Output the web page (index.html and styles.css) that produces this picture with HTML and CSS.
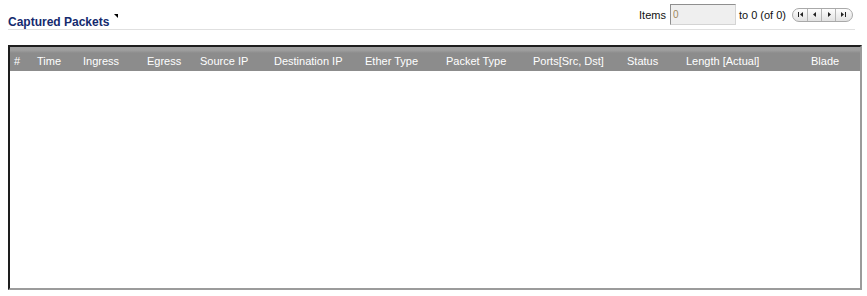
FILE: index.html
```html
<!DOCTYPE html>
<html>
<head>
<meta charset="utf-8">
<link rel="stylesheet" href="styles.css">
</head>
<body>
<div class="panel">
  <div class="topbar">
    <div class="title">Captured Packets<span class="corner"></span></div>
    <div class="pager">
      <span class="label">Items</span>
      <input class="items" type="text" value="0">
      <span class="range">to 0 (of 0)</span>
      <div class="nav">
        <span class="btn"><svg width="7" height="5" viewBox="0 0 7 5"><rect x="0" y="0" width="1" height="5" fill="#222"/><path d="M5 0 L2 2.5 L5 5Z" fill="#222"/></svg></span>
        <span class="btn"><svg width="4" height="5" viewBox="0 0 4 5"><path d="M3 0 L0 2.5 L3 5Z" fill="#222"/></svg></span>
        <span class="btn"><svg width="4" height="5" viewBox="0 0 4 5"><path d="M1 0 L4 2.5 L1 5Z" fill="#222"/></svg></span>
        <span class="btn"><svg width="7" height="5" viewBox="0 0 7 5"><path d="M2 0 L5 2.5 L2 5Z" fill="#222"/><rect x="6" y="0" width="1" height="5" fill="#222"/></svg></span>
      </div>
    </div>
  </div>
  <div class="grid">
    <div class="head">
      <span>#</span>
      <span>Time</span>
      <span>Ingress</span>
      <span>Egress</span>
      <span>Source IP</span>
      <span>Destination IP</span>
      <span>Ether Type</span>
      <span>Packet Type</span>
      <span>Ports[Src, Dst]</span>
      <span>Status</span>
      <span>Length [Actual]</span>
      <span>Blade</span>
    </div>
    <div class="body"></div>
  </div>
</div>
</body>
</html>
```
FILE: styles.css
```css
html, body {
  margin: 0;
  padding: 0;
  background: #fff;
}
body {
  font-family: "Liberation Sans", Arial, sans-serif;
  font-size: 11px;
  color: #000;
}
.panel {
  width: 854px;
  padding: 0 0 0 8px;
}
.topbar {
  display: flex;
  justify-content: space-between;
  align-items: flex-end;
  height: 29px;
  width: 847px;
  border-bottom: 1px solid #e0e0e0;
}
.title {
  font-weight: bold;
  font-size: 12px;
  color: #142a6e;
  padding-bottom: 0;
  position: relative;
}
.corner {
  position: absolute;
  right: -9px;
  top: -1px;
  width: 0;
  height: 0;
  border-top: 4px solid #000;
  border-left: 4px solid transparent;
}
.pager {
  display: flex;
  align-items: center;
  align-self: flex-start;
  margin-top: 4px;
  color: #111;
}
.label {
  margin-right: 4px;
}
.items {
  box-sizing: border-box;
  width: 66px;
  height: 21px;
  margin: 0;
  padding: 0 0 0 2px;
  background: #efefef;
  border: 1px solid #d4d4d4;
  border-top-color: #8f8f8f;
  border-left-color: #8f8f8f;
  font-family: "Liberation Sans", Arial, sans-serif;
  font-size: 10px;
  color: #a08a60;
  outline: none;
}
.range {
  margin-left: 3px;
}
.nav {
  display: flex;
  margin-left: 6px;
  margin-right: 2px;
  height: 12px;
  border: 1px solid #a9a9a9;
  border-radius: 7px;
  overflow: hidden;
  background: linear-gradient(#fdfdfd, #e2e2e2);
  padding: 0 3px;
}
.btn {
  display: flex;
  align-items: center;
  justify-content: center;
  width: 13px;
  border-left: 1px solid #b5b5b5;
}
.btn:first-child {
  border-left: none;
  width: 11px;
}
.grid {
  margin-top: 15px;
  box-sizing: border-box;
  width: 854px;
  height: 245px;
  border: 2px solid #9b9b9b;
  border-top-color: #1e1e1e;
  border-left-color: #1e1e1e;
  display: flex;
  flex-direction: column;
}
.head {
  display: grid;
  grid-template-columns: 23px 46px 64px 53px 74px 91px 81px 87px 94px 59px 125px 1fr;
  height: 24px;
  box-sizing: border-box;
  padding-top: 3px;
  align-items: center;
  background: linear-gradient(#a0a0a0 0, #a0a0a0 3px, #8c8c8c 6px, #8c8c8c 100%);
  color: #fff;
  white-space: nowrap;
}
.head span {
  padding-left: 4px;
}
.body {
  flex: 1;
  background: #fff;
}
```
